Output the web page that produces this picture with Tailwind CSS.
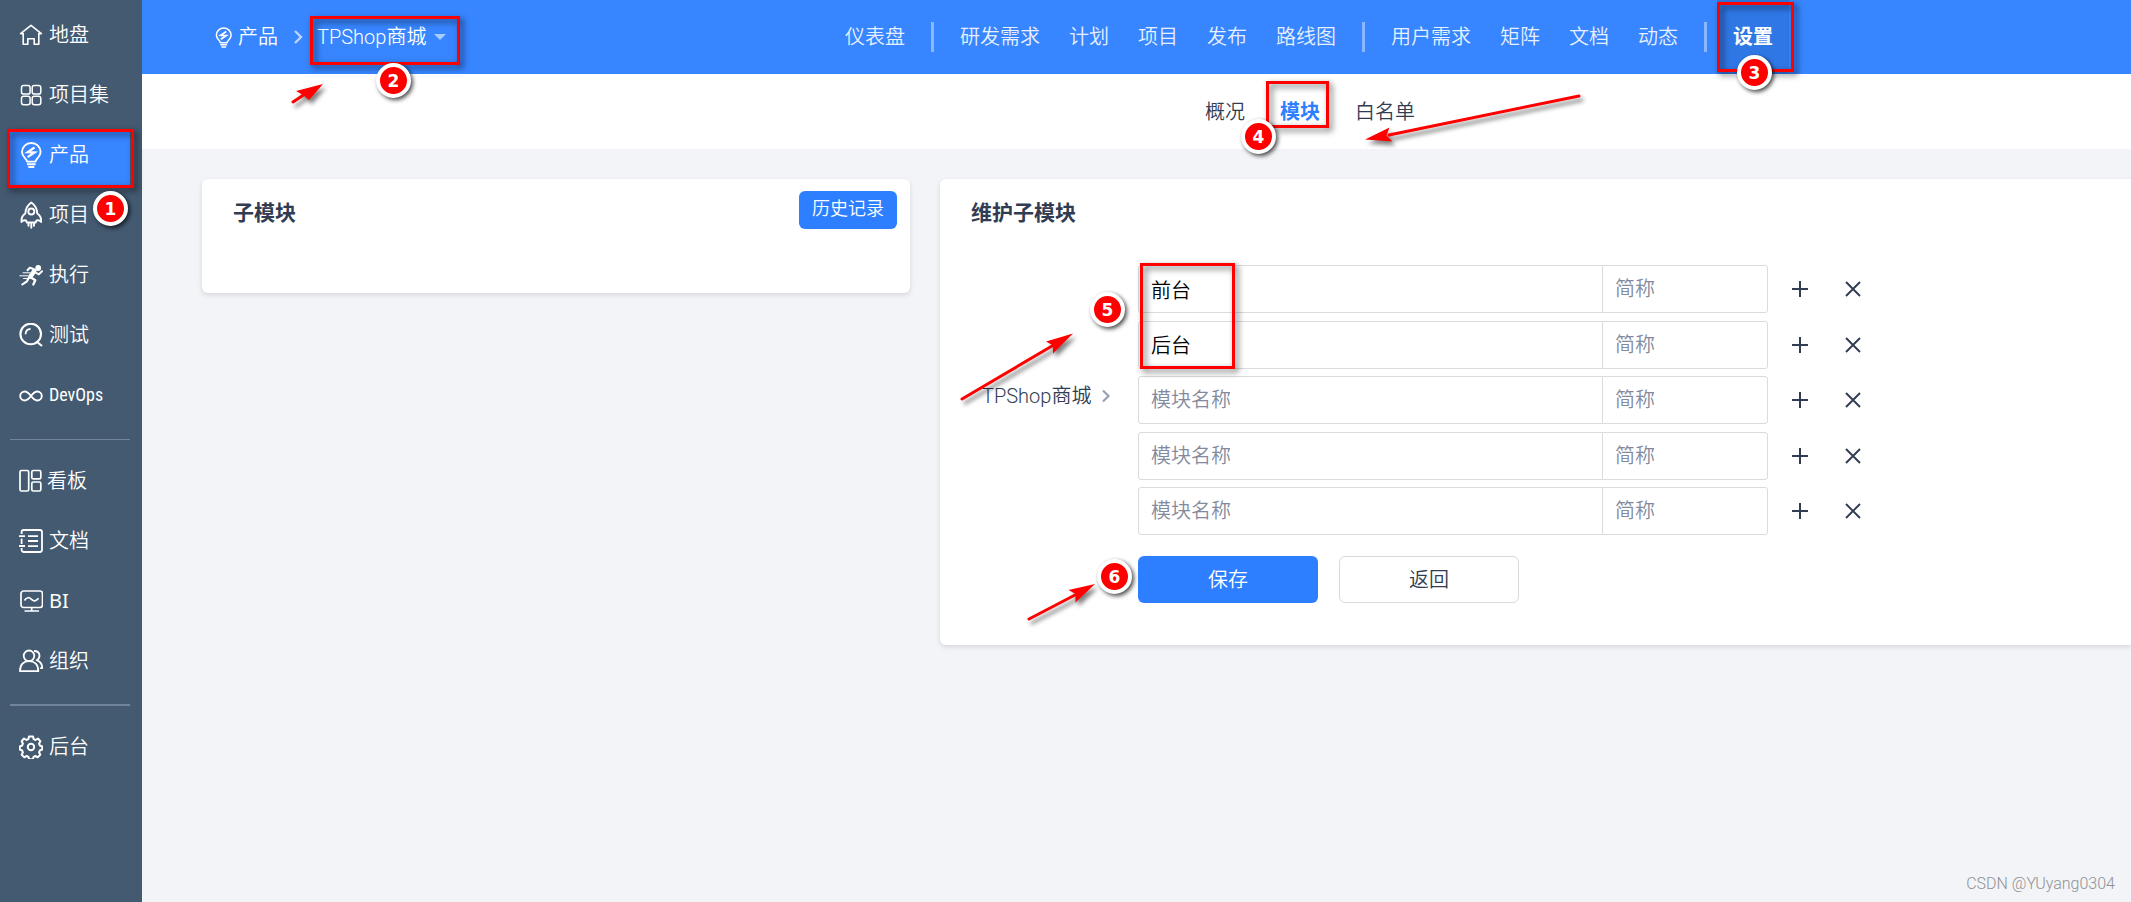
<!DOCTYPE html>
<html lang="zh-CN">
<head>
<meta charset="utf-8">
<title>产品 - 维护子模块</title>
<script src="https://cdn.jsdelivr.net/npm/@tailwindcss/browser@4"></script>
</head>
<body class="relative flex min-h-screen overflow-x-hidden bg-[#f3f4f7] font-[Roboto,'Noto_Sans_CJK_SC',sans-serif] text-[20px] leading-7 font-[350] text-[#313c52]">

<!-- Main menu -->
<aside class="w-[142px] shrink-0 bg-[#435a71] pt-[10px] pr-3 pl-[10px] text-white">
  <nav class="flex flex-col gap-1" aria-label="主菜单">
    <a href="#" class="flex h-14 items-center gap-[6px] pb-[6px] pl-[9px]">
      <svg class="h-6 w-6 shrink-0" viewBox="0 0 24 24" fill="none" stroke="currentColor" stroke-width="1.600" stroke-linejoin="round" stroke-linecap="round"><path d="M4.200 10.600H1.600L12 2.400l10.400 8.200h-2.600v10.600h-4.600v-5.400H8.800v5.400H4.200z"/></svg>
      <span>地盘</span></a>
    <a href="#" class="flex h-14 items-center gap-[6px] pb-[6px] pl-[9px]">
      <svg class="h-6 w-6 shrink-0" viewBox="0 0 24 24" fill="none" stroke="currentColor" stroke-width="1.500"><rect x="2.500" y="2.500" width="8.600" height="8.600" rx="2.200"/><rect x="13.200" y="2.500" width="8.600" height="8.600" rx="2.200"/><rect x="2.500" y="13.200" width="8.600" height="8.600" rx="2.200"/><rect x="13.200" y="13.200" width="8.600" height="8.600" rx="2.200"/></svg>
      <span>项目集</span></a>
    <a href="#" aria-current="page" class="flex h-14 items-center gap-[6px] bg-[#3785ff] pb-[6px] pl-[9px]">
      <svg class="h-[26px] w-6 shrink-0" viewBox="0 0 24 26" fill="none" stroke="currentColor" stroke-width="1.900"><path d="M8 19.600c0-3-5-4.600-5-9.600a9.300 9 0 0 1 18.600 0c0 5-5 6.600-5 9.600z" stroke-linejoin="round"/><path d="M8 22.300h8.600M9.300 25h6"/><path d="M15.500 5.500 8.600 10.200l7 .3-7 4.700" stroke-width="2.200"/></svg>
      <span>产品</span></a>
    <a href="#" class="flex h-14 items-center gap-[6px] pb-[6px] pl-[9px]">
      <svg class="h-7 w-6 shrink-0" viewBox="0 0 24 28" fill="none" stroke="currentColor" stroke-width="1.900" stroke-linejoin="round" stroke-linecap="round"><path d="M7 19.500c-1.700-.5-3.200 0-4.500 1.500-.4-3.500.8-6.500 3.800-8.500.3-4.800 2.700-8.700 6-11 3.300 2.300 5.700 6.200 6 11 3 2 4.200 5 3.800 8.500-1.300-1.500-2.800-2-4.500-1.500l-1 2H8z"/><circle cx="12.300" cy="10.500" r="3"/><path d="M9.500 22.500v2.300M12.300 22.500v4.300M15 22.500v2.300"/></svg>
      <span>项目</span></a>
    <a href="#" class="flex h-14 items-center gap-[6px] pb-[6px] pl-[9px]">
      <svg class="h-6 w-6 shrink-0" viewBox="0 0 24 24" fill="none" stroke="currentColor" stroke-linecap="round" stroke-linejoin="round"><circle cx="19.200" cy="5" r="2.900" fill="currentColor" stroke="none"/><path d="M15.300 8 11.500 13.500" stroke-width="4.600"/><path d="M14.500 6 10.800 4.800 8.500 7.300" stroke-width="2"/><path d="M16.500 9.500l3.300 1.900 3.200-3.200" stroke-width="2"/><path d="M12 14.500l4.300 2.700-2 4.300" stroke-width="2.300"/><path d="M10 14.500l-2 3.800-4.600 3" stroke-width="2.200"/><path d="M4 9.800h7M.8 12.800h8M4.500 15.500h4" stroke-width="1"/></svg>
      <span>执行</span></a>
    <a href="#" class="flex h-14 items-center gap-[6px] pb-[6px] pl-[9px]">
      <svg class="h-6 w-6 shrink-0" viewBox="0 0 24 24" fill="none" stroke="currentColor" stroke-width="2.100"><circle cx="11.700" cy="11" r="10.300"/><path d="M17.500 18.500 23 23"/><path d="M6.600 11.200c0-3 2-5.100 5-5.300" stroke-width="1.800"/></svg>
      <span>测试</span></a>
    <a href="#" class="flex h-14 items-center gap-[6px] pb-[6px] pl-[9px]">
      <svg class="h-6 w-6 shrink-0" viewBox="0 0 24 24" fill="none" stroke="currentColor" stroke-width="1.900"><path d="M12 13c-2-2.600-3.600-4.500-6.300-4.500a4.500 4.500 0 0 0 0 9C8.400 17.500 10 15.600 12 13s3.600-4.500 6.300-4.500a4.500 4.500 0 0 1 0 9C15.600 17.500 14 15.600 12 13z"/></svg>
      <span class="font-['Liberation_Sans_Narrow','Roboto_Condensed','Liberation_Sans',sans-serif] text-[18px] font-normal">DevOps</span></a>

    <hr class="mt-[9px] mb-3 border-t border-[#71859a]">

    <a href="#" class="flex h-14 items-center gap-1 pb-[6px] pl-[9px]">
      <svg class="h-6 w-6 shrink-0" viewBox="0 0 24 24" fill="none" stroke="currentColor" stroke-width="1.700"><rect x="1" y="1.500" width="8.700" height="20.500" rx="1.500"/><rect x="12.800" y="1.500" width="9" height="8.400" rx="1.500"/><rect x="12.800" y="13" width="9" height="9" rx="1.500"/></svg>
      <span>看板</span></a>
    <a href="#" class="flex h-14 items-center gap-[6px] pb-[6px] pl-[9px]">
      <svg class="h-6 w-6 shrink-0" viewBox="0 0 24 24" fill="none" stroke="currentColor" stroke-width="1.800"><path d="M2.600 5V3.200A2.200 2.200 0 0 1 4.800 1h16a2.200 2.200 0 0 1 2.200 2.200v17.600a2.200 2.200 0 0 1-2.200 2.200h-16a2.200 2.200 0 0 1-2.200-2.200V19M2.600 9.500v5.500M0 7.200h6M0 17h6M9 7.200h10M9 12h10M9 17.200h10"/></svg>
      <span>文档</span></a>
    <a href="#" class="flex h-14 items-center gap-[6px] pb-[6px] pl-[9px]">
      <svg class="h-6 w-6 shrink-0" viewBox="0 0 24 24" fill="none" stroke="currentColor" stroke-width="1.700"><rect x="2" y="2" width="21.500" height="16.500" rx="2.500"/><path d="M12.700 18.500v3M5.500 22h14.500M5.500 11.500c2-3.500 4.500-3.500 7-1.200s4.500 2 7-1" /></svg>
      <span class="font-['Noto_Sans',sans-serif] font-normal">BI</span></a>
    <a href="#" class="flex h-14 items-center gap-[6px] pb-[6px] pl-[9px]">
      <svg class="h-6 w-6 shrink-0" viewBox="0 0 24 24" fill="none" stroke="currentColor" stroke-width="1.800" stroke-linejoin="round"><circle cx="10" cy="6.800" r="5.300"/><path d="M1 22.200c0-6.500 3.500-10.100 9-10.100s9.300 3.600 9.300 10.100z"/><path d="M15 2c3.500 0 5.500 2 5.500 4.800 0 2-1 3.500-2.800 4.400 3.700 1.300 5.500 4 5.500 8h-2"/></svg>
      <span>组织</span></a>

    <hr class="mt-2 mb-3 border-t-2 border-[#71859a]">

    <a href="#" class="flex h-14 items-center gap-[6px] pb-[6px] pl-[9px]">
      <svg class="h-6 w-6 shrink-0" viewBox="0 0 24 24" fill="none" stroke="currentColor" stroke-width="2" stroke-linejoin="round"><path d="M10 1.500h4l.7 2.700 1.800.8 2.500-1.500 2.300 2.700-1.200 2.500.7 1.800 2.400 1v3l-2.400 1-.7 1.800 1.200 2.500-2.600 2.500-2.400-1.300-1.700.8-.8 2.500h-3.600l-.8-2.500-1.700-.8-2.400 1.300-2.600-2.500 1.200-2.500-.7-1.800-2.400-1v-3l2.400-1 .7-1.800-1.200-2.500L5 3.500 7.500 5l1.800-.8z"/><circle cx="12" cy="12" r="3.200"/></svg>
      <span>后台</span></a>
  </nav>
</aside>

<div class="flex min-w-0 flex-1 flex-col">
  <!-- Product bar -->
  <header class="flex h-[74px] items-center bg-[#3785ff] text-white">
    <div class="flex w-[703px] shrink-0 items-center pl-[72px]">
      <a href="#" class="flex items-center gap-[5px]">
        <svg class="h-[21px] w-[19px]" viewBox="0 0 24 26" fill="none" stroke="currentColor" stroke-width="1.900"><path d="M8 19.600c0-3-5-4.600-5-9.600a9.300 9 0 0 1 18.600 0c0 5-5 6.600-5 9.600z" stroke-linejoin="round"/><path d="M8 22.300h8.600M9.300 25h6"/><path d="M15.500 5.500 8.600 10.200l7 .3-7 4.700" stroke-width="2.200"/></svg>
        <span>产品</span></a>
      <svg class="mr-[13px] ml-[14px] h-4 w-3" viewBox="0 0 12 16" fill="none" stroke="#b9d5ff" stroke-width="2.400"><path d="M3 2l6 6-6 6"/></svg>
      <button type="button" class="flex items-center gap-2">TPShop商城
        <svg class="h-[6px] w-3" viewBox="0 0 12 6" fill="#a9cbff"><path d="M0 0h12L6 6z"/></svg></button>
    </div>
    <nav class="flex h-full shrink-0 items-center gap-[29px] text-[#e6f0ff]" aria-label="产品导航">
      <a href="#">仪表盘</a>
      <span class="-mx-[3px] h-[30px] w-[3px] bg-[#8ab7ff]"></span>
      <a href="#">研发需求</a>
      <a href="#">计划</a>
      <a href="#">项目</a>
      <a href="#">发布</a>
      <a href="#">路线图</a>
      <span class="-mx-[3px] h-[30px] w-[3px] bg-[#8ab7ff]"></span>
      <a href="#">用户需求</a>
      <a href="#">矩阵</a>
      <a href="#">文档</a>
      <a href="#">动态</a>
      <span class="-mx-[3px] h-[30px] w-[3px] bg-[#8ab7ff]"></span>
      <a href="#" aria-current="page" class="-mx-4 flex h-full items-center bg-[#3077e6] px-4 font-bold text-white">设置</a>
    </nav>
  </header>

  <!-- Settings tabs -->
  <nav class="flex h-[75px] items-center gap-[35px] bg-white pl-[1063px]" aria-label="设置">
    <a href="#">概况</a>
    <a href="#" aria-current="page" class="font-bold text-[#2e7fff]">模块</a>
    <a href="#">白名单</a>
  </nav>

  <main class="flex items-start gap-[30px] pt-[30px] pl-[60px]">
    <section class="flex h-[114px] w-[708px] shrink-0 items-start justify-between rounded-md bg-white pt-3 pr-[13px] pl-[31px] shadow-[0_2px_5px_rgba(0,0,0,0.12)]">
      <h2 class="pt-2 text-[21px] font-bold">子模块</h2>
      <button type="button" class="h-[38px] rounded-md bg-[#2e7fff] px-[13px] pb-[2px] text-[18px] text-white">历史记录</button>
    </section>

    <section class="min-w-0 flex-1 rounded-l-md bg-white pt-5 pb-[42px] pl-[31px] shadow-[0_2px_5px_rgba(0,0,0,0.12)]">
      <h2 class="text-[21px] font-bold">维护子模块</h2>
      <form class="mt-[38px] grid grid-cols-[167px_1fr]">
        <div class="flex items-center gap-[9px] pb-2 pl-[11px]">
          <span>TPShop商城</span>
          <svg class="h-4 w-3" viewBox="0 0 12 16" fill="none" stroke="#9ba1b3" stroke-width="2.200"><path d="M3 2.500 8.500 8 3 13.500"/></svg>
        </div>
        <div id="rows" class="flex h-[270px] flex-col justify-between"></div>
        <div class="col-start-2 mt-[21px] flex gap-[21px]">
          <button type="submit" class="h-[47px] w-[180px] rounded-md bg-[#2e7fff] text-white">保存</button>
          <button type="button" class="h-[47px] w-[180px] rounded-md border border-[#d8dade] bg-white">返回</button>
        </div>
      </form>
    </section>
  </main>
</div>

<template id="row">
  <div class="flex h-12 items-center">
    <input type="text" aria-label="模块名称" placeholder="模块名称" class="h-12 w-[465px] rounded-l-[3px] border border-[#d9dbdd] px-3 text-black outline-none placeholder:text-[#838a9d]">
    <input type="text" aria-label="简称" placeholder="简称" class="-ml-px h-12 w-[166px] rounded-r-[3px] border border-[#d9dbdd] px-3 text-black outline-none placeholder:text-[#838a9d]">
    <button type="button" aria-label="添加" class="ml-[22px] p-[2px]"><svg class="h-4 w-4" viewBox="0 0 16 16" stroke="currentColor" stroke-width="2"><path d="M8 0v16M0 8h16"/></svg></button>
    <button type="button" aria-label="删除" class="ml-[33px] p-[2px]"><svg class="h-4 w-4" viewBox="0 0 16 16" stroke="currentColor" stroke-width="1.900"><path d="M1 1l14 14M15 1 1 15"/></svg></button>
  </div>
</template>
<script>
  const rows = document.getElementById('rows');
  for (const value of ['前台', '后台', '', '', '']) {
    const row = document.getElementById('row').content.cloneNode(true);
    row.querySelector('input').value = value;
    rows.append(row);
  }
</script>

<!-- Walkthrough marks laid over the page -->
<div class="pointer-events-none absolute inset-0 overflow-hidden" aria-hidden="true">
  <div class="absolute top-[129px] left-[7px] h-[59px] w-[127px] border-3 border-[#f00] drop-shadow-[3px_3px_3px_rgba(0,0,0,0.6)]"></div>
  <div class="absolute top-4 left-[310px] h-[49px] w-[150px] border-3 border-[#f00] drop-shadow-[3px_3px_3px_rgba(0,0,0,0.6)]"></div>
  <div class="absolute top-[2px] left-[1717px] h-[70px] w-[77px] border-3 border-[#f00] drop-shadow-[3px_3px_3px_rgba(0,0,0,0.6)]"></div>
  <div class="absolute top-[81px] left-[1266px] h-[47px] w-[63px] border-3 border-[#f00] drop-shadow-[3px_3px_3px_rgba(0,0,0,0.6)]"></div>
  <div class="absolute top-[263px] left-[1140px] h-[106px] w-[95px] border-3 border-[#f00] drop-shadow-[3px_3px_3px_rgba(0,0,0,0.6)]"></div>

  <svg class="absolute top-0 left-0 h-[700px] w-[1700px] drop-shadow-[3px_4px_2px_rgba(0,0,0,0.5)]" viewBox="0 0 1700 700" fill="#f00" stroke="#f00" stroke-width="3" stroke-linecap="round">
    <path d="M293 102l12-8M1579 96l-190 39M962 399l90-53M1029 619l46-24"/>
    <g stroke="none">
      <path d="M323 84 296 91l7 4 6 5z"/>
      <path d="M1365 139.500l24.500-12-3 8 6 6z"/>
      <path d="M1073 333.500l-27 8 7 4 0 8z"/>
      <path d="M1095 584l-26.500 6 7 4 0 8.500z"/>
    </g>
  </svg>

  <div class="font-['DejaVu_Sans',sans-serif] text-[17px] font-bold text-white">
    <span class="absolute top-[191px] left-[93px] flex h-[35px] w-[35px] items-center justify-center rounded-full border-4 border-white bg-[#f00] shadow-[2px_2px_4px_rgba(0,0,0,0.7)]">1</span>
    <span class="absolute top-[63px] left-[376px] flex h-[35px] w-[35px] items-center justify-center rounded-full border-4 border-white bg-[#f00] shadow-[2px_2px_4px_rgba(0,0,0,0.7)]">2</span>
    <span class="absolute top-[55px] left-[1737px] flex h-[35px] w-[35px] items-center justify-center rounded-full border-4 border-white bg-[#f00] shadow-[2px_2px_4px_rgba(0,0,0,0.7)]">3</span>
    <span class="absolute top-[119px] left-[1241px] flex h-[35px] w-[35px] items-center justify-center rounded-full border-4 border-white bg-[#f00] shadow-[2px_2px_4px_rgba(0,0,0,0.7)]">4</span>
    <span class="absolute top-[292px] left-[1090px] flex h-[35px] w-[35px] items-center justify-center rounded-full border-4 border-white bg-[#f00] shadow-[2px_2px_4px_rgba(0,0,0,0.7)]">5</span>
    <span class="absolute top-[559px] left-[1097px] flex h-[35px] w-[35px] items-center justify-center rounded-full border-4 border-white bg-[#f00] shadow-[2px_2px_4px_rgba(0,0,0,0.7)]">6</span>
  </div>

  <span class="absolute right-4 bottom-1 text-[16px] text-[#909295]">CSDN @YUyang0304</span>
</div>
</body>
</html>
